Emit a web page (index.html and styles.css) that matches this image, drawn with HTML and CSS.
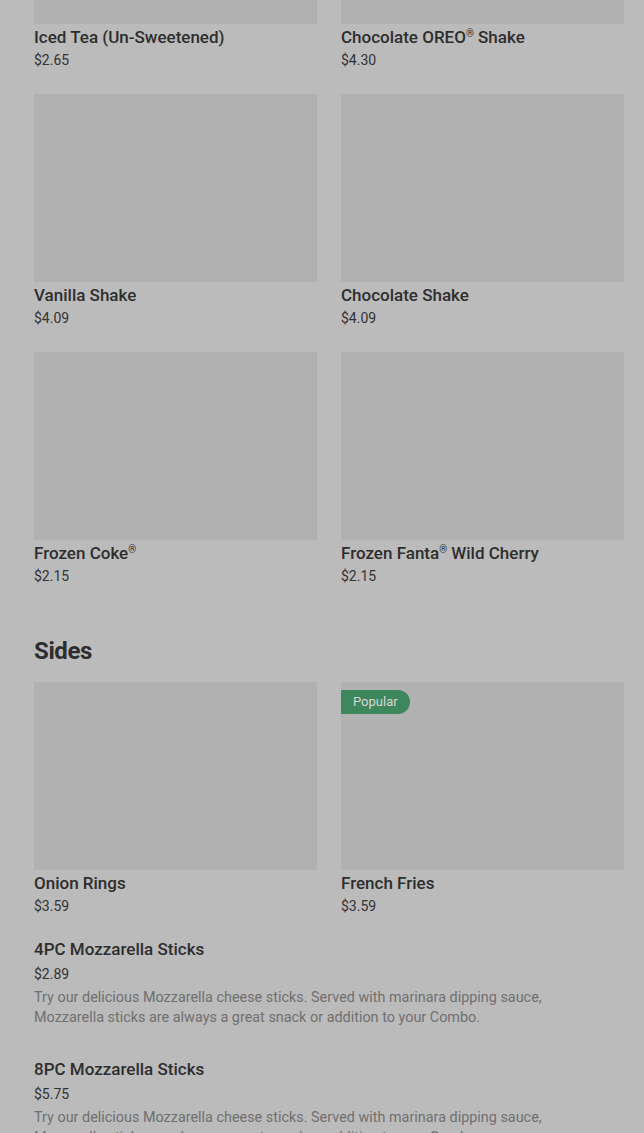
FILE: index.html
```html
<!DOCTYPE html>
<html lang="en">
<head>
    <meta charset="UTF-8">
    <title>Menu</title>
    <link rel="stylesheet" href="styles.css">
</head>
<body>
<div class="menu">
    <div class="grid grid-top">
        <div class="card">
            <div class="thumb"></div>
            <div class="name">Iced Tea (Un-Sweetened)</div>
            <div class="price">$2.65</div>
        </div>
        <div class="card">
            <div class="thumb"></div>
            <div class="name">Chocolate OREO<span class="reg">®</span> Shake</div>
            <div class="price">$4.30</div>
        </div>
        <div class="card">
            <div class="thumb"></div>
            <div class="name">Vanilla Shake</div>
            <div class="price">$4.09</div>
        </div>
        <div class="card">
            <div class="thumb"></div>
            <div class="name">Chocolate Shake</div>
            <div class="price">$4.09</div>
        </div>
        <div class="card">
            <div class="thumb"></div>
            <div class="name">Frozen Coke<span class="reg">®</span></div>
            <div class="price">$2.15</div>
        </div>
        <div class="card">
            <div class="thumb"></div>
            <div class="name">Frozen Fanta<span class="reg">®</span> Wild Cherry</div>
            <div class="price">$2.15</div>
        </div>
    </div>

    <h2 class="section-title">Sides</h2>

    <div class="grid">
        <div class="card">
            <div class="thumb"></div>
            <div class="name">Onion Rings</div>
            <div class="price">$3.59</div>
        </div>
        <div class="card">
            <div class="thumb">
                <span class="badge">Popular</span>
            </div>
            <div class="name">French Fries</div>
            <div class="price">$3.59</div>
        </div>
    </div>

    <div class="row-item">
        <div class="name">4PC Mozzarella Sticks</div>
        <div class="price">$2.89</div>
        <p class="desc">Try our delicious Mozzarella cheese sticks. Served with marinara dipping sauce, Mozzarella sticks are always a great snack or addition to your Combo.</p>
    </div>
    <div class="row-item">
        <div class="name">8PC Mozzarella Sticks</div>
        <div class="price">$5.75</div>
        <p class="desc">Try our delicious Mozzarella cheese sticks. Served with marinara dipping sauce, Mozzarella sticks are always a great snack or addition to your Combo.</p>
    </div>
</div>
</body>
</html>
```

FILE: styles.css
```css
body {
    margin: 0;
    background: #bbbbbb;
    font-family: Roboto, "Liberation Sans", sans-serif;
    color: #2e2e2e;
    overflow: hidden;
}
.menu {
    padding: 0 20px 0 34px;
    margin-top: -164px;
}
.grid {
    display: grid;
    grid-template-columns: 1fr 1fr;
    column-gap: 24px;
    row-gap: 0;
}
.card {
    height: 258px;
}
.thumb {
    position: relative;
    height: 188px;
    background: #b1b1b1;
}
.name {
    font-size: 17px;
    font-weight: 500;
    line-height: 22px;
    margin-top: 2px;
}
.reg {
    font-size: 10px;
    vertical-align: 6px;
    line-height: 0;
}
.price {
    font-size: 14px;
    line-height: 20px;
    margin-top: 2px;
    color: #333;
}
.section-title {
    font-size: 24px;
    font-weight: 700;
    margin: 26px 0 16px;
    line-height: 30px;
    letter-spacing: -0.4px;
}
.grid + .row-item {
    margin-top: -4px;
}
.badge {
    position: absolute;
    left: 0;
    top: 8px;
    height: 24px;
    line-height: 24px;
    padding: 0 12px;
    background: #3d875c;
    color: #d6d6d6;
    font-size: 13px;
    border-radius: 0 12px 12px 0;
}
.row-item {
    padding-bottom: 28px;
}
.row-item .price {
    margin-top: 4px;
}
.desc {
    margin: 4px 0 0;
    font-size: 14.4px;
    line-height: 20px;
    color: #707070;
    max-width: 530px;
}
```
